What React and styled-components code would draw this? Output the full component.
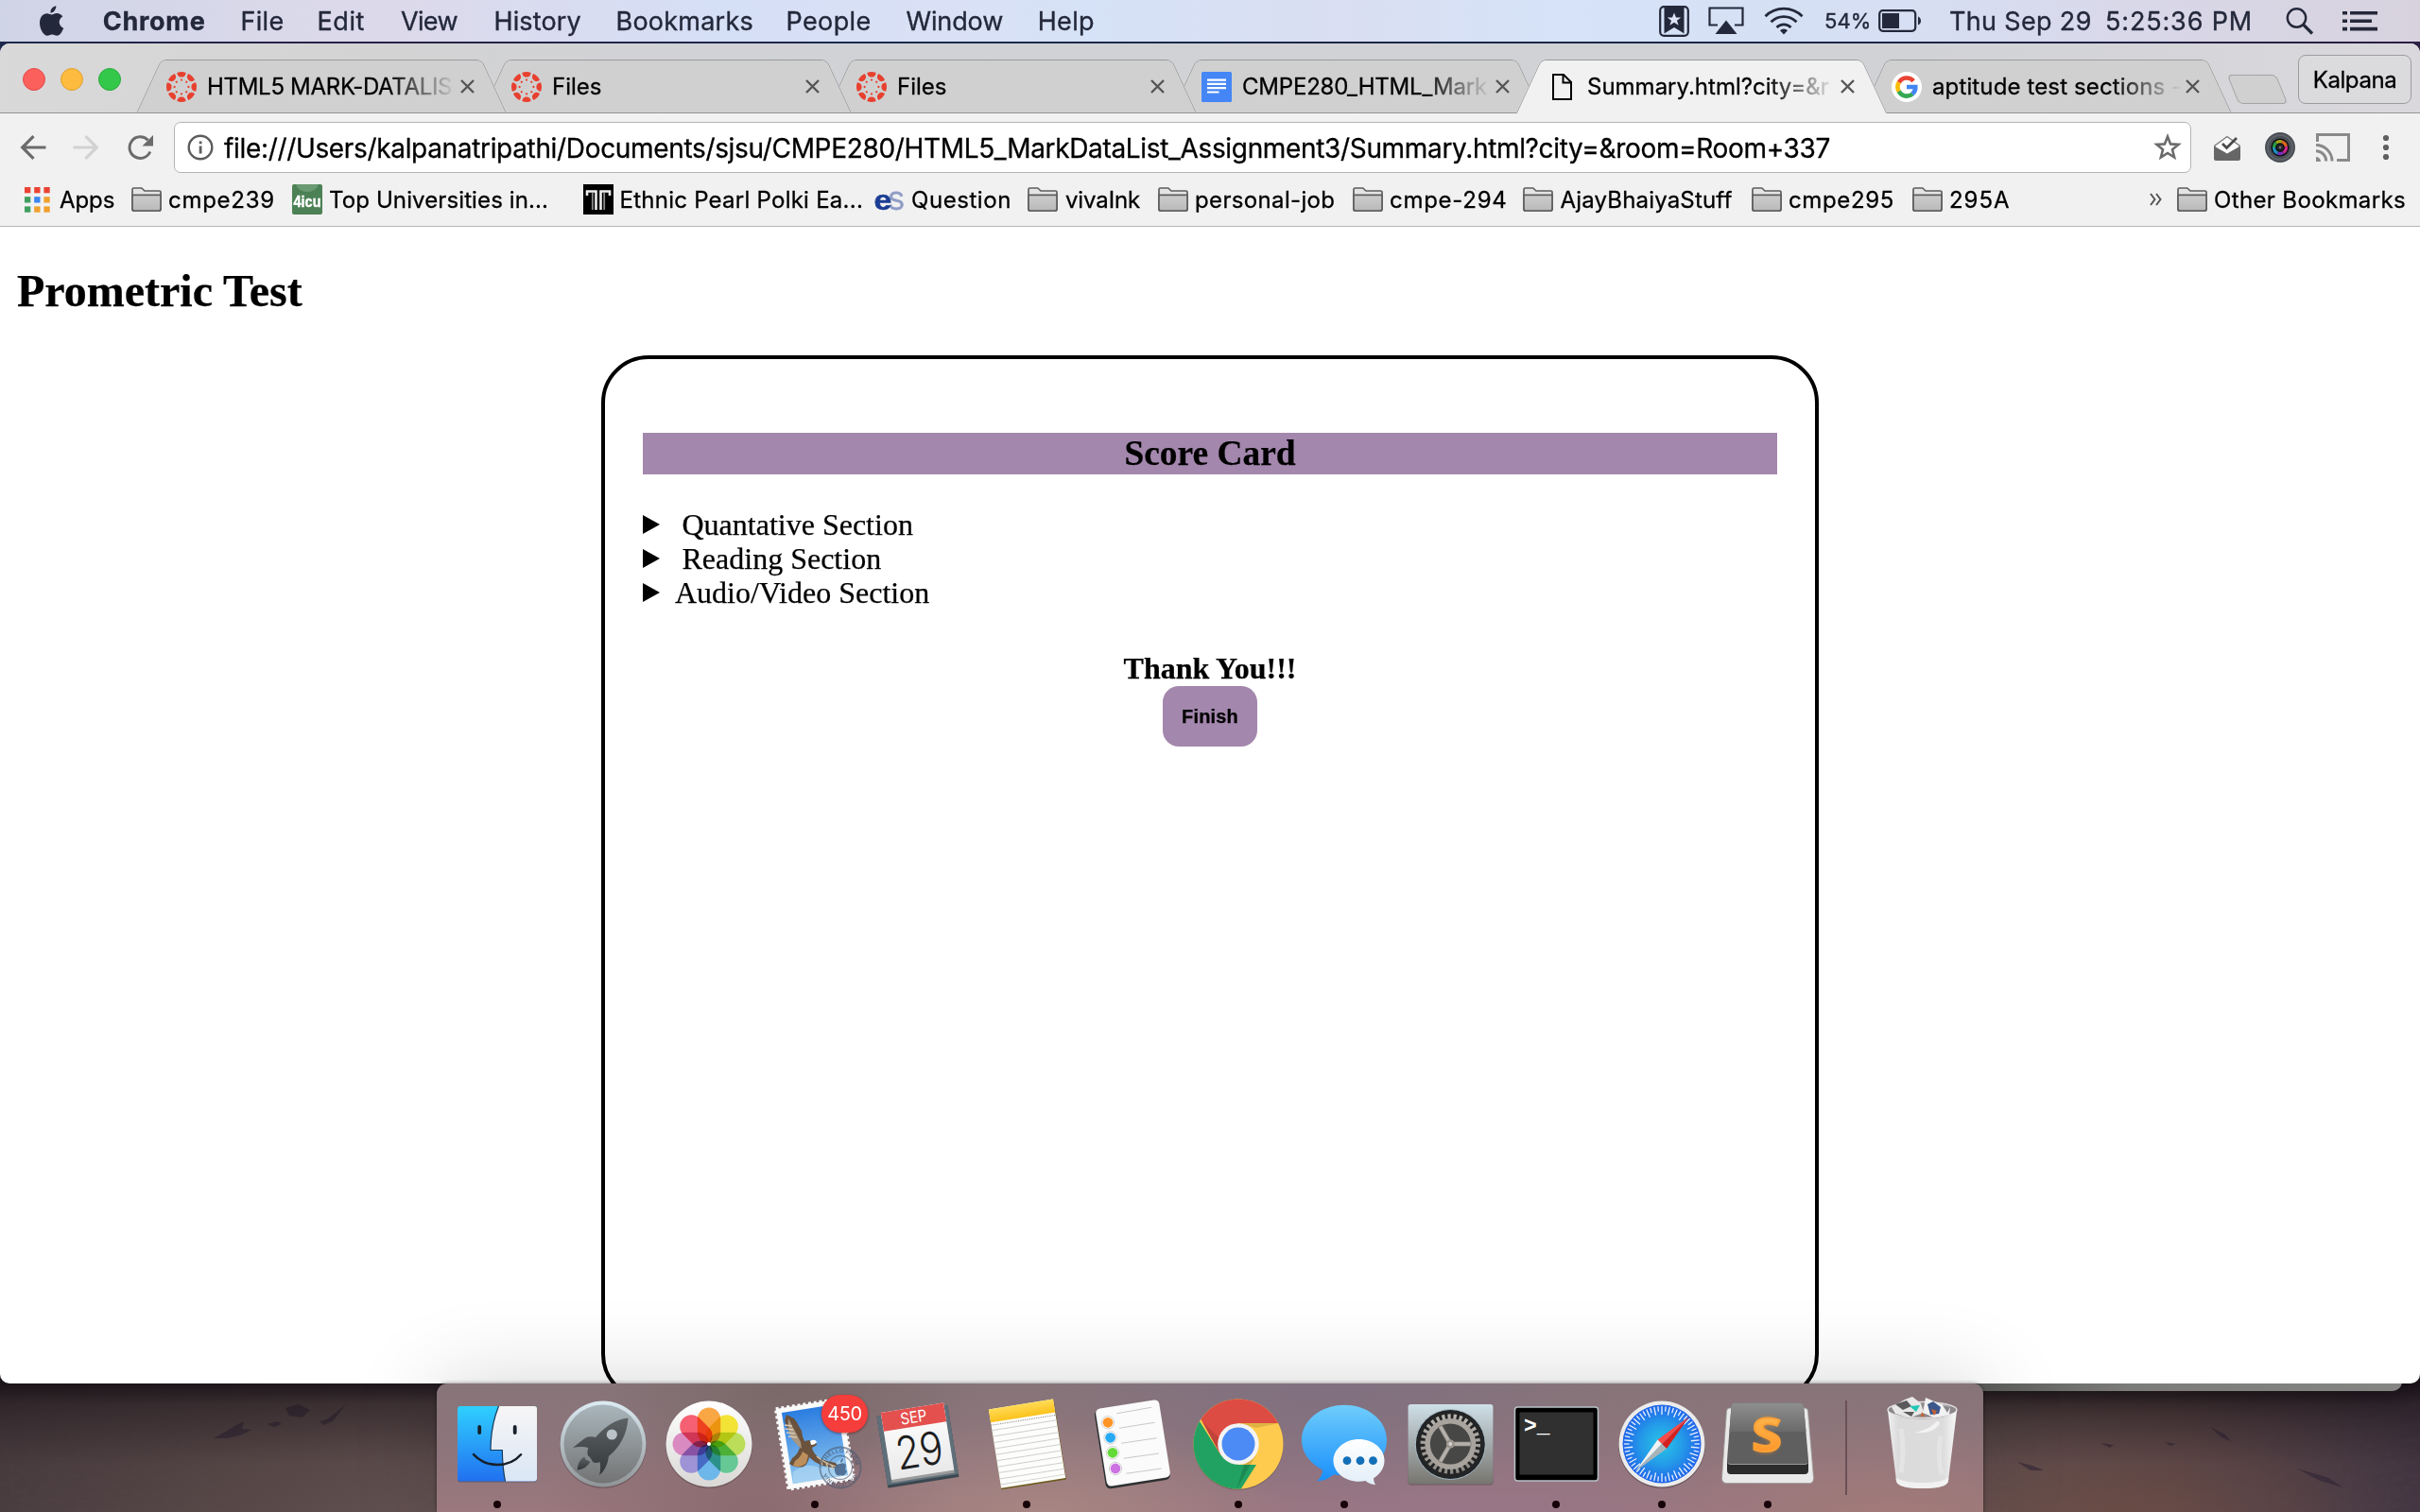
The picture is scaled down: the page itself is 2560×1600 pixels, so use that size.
import React from "react";
import styled, { createGlobalStyle, css } from "styled-components";

const UI = `Inter, Roboto, "Liberation Sans", sans-serif`;
const SERIF = `"Liberation Serif", "Times New Roman", serif`;
const PURPLE = "#a387ad";
const INK = "#23283a";

const Global = createGlobalStyle`
  html, body { margin: 0; padding: 0; }
  body { width: 2560px; height: 1600px; overflow: hidden; font-family: ${UI}; }
  *, *::before, *::after { box-sizing: border-box; }
  svg { display: block; flex: none; }
`;

const Desktop = styled.div`
  position: relative;
  width: 2560px;
  height: 1600px;
  overflow: hidden;
  display: flex;
  flex-direction: column;
  background: linear-gradient(90deg, #1d2a4c 0, #2a2148 350px, #1c2a4e 900px, #1c2748 2000px, #2c1e44 100%);
`;

/* ---------- menu bar ---------- */

const MenuBar = styled.header`
  display: flex;
  flex: none;
  align-items: center;
  height: 44px;
  margin-bottom: 2px;
  color: ${INK};
  font-size: 27px;
  -webkit-text-stroke: 0.35px ${INK};
  background: linear-gradient(90deg, #cfd4e6 0, #dad9ea 300px, #dcd9ea 420px, #d5dff6 760px, #dae1f6 1000px, #d6e2f7 1150px, #dadff2 1420px, #d6e3f8 1650px, #d6dff4 2000px, #d9d8e9 2250px, #d7d2de 100%);
`;

const Cell = styled.span`
  display: flex;
  align-items: center;
  flex: none;
  width: ${(p) => p.$w}px;
  height: 100%;
  white-space: pre;
  font-weight: ${(p) => (p.$strong ? 700 : 400)};
  font-size: ${(p) => (p.$size ? p.$size + "px" : "inherit")};
  letter-spacing: ${(p) => p.$ls || 0}px;
`;

const Spacer = styled.div`
  flex: 1;
`;

/* ---------- browser window ---------- */

const BrowserWindow = styled.main`
  position: relative;
  z-index: 1;
  flex: none;
  display: flex;
  flex-direction: column;
  height: 1418px;
  overflow: hidden;
  border-radius: 10px;
  background: #fff;
`;

const TabStrip = styled.div`
  position: relative;
  display: flex;
  flex: none;
  height: 74px;
  background: linear-gradient(90deg, #d9d9da 0, #d3d3d4 400px, #d0d2d6 900px, #d0d2d5 2000px, #dad8dc 100%);
  border-bottom: 1px solid #949494;
  -webkit-text-stroke: 0.3px #000;
`;

const Lights = styled.div`
  display: flex;
  gap: 16px;
  width: 144px;
  flex: none;
  padding: 26px 0 0 24px;
`;

const Light = styled.span`
  width: 24px;
  height: 24px;
  border-radius: 50%;
  background: ${(p) => p.$fill};
  border: 1px solid ${(p) => p.$edge};
`;

const tabFace = css`
  content: "";
  position: absolute;
  top: 0;
  height: 57px;
  background: ${(p) => (p.$active ? "#f1f1f1" : "#d0d0d0")};
  border: 1.5px solid #9b9b9c;
  border-bottom: ${(p) => (p.$active ? "0" : "1px solid #949494")};
`;

const Tab = styled.div`
  position: relative;
  z-index: ${(p) => p.$z};
  display: flex;
  align-items: center;
  flex: none;
  width: 392px;
  height: 57px;
  margin: 17px -27px 0 0;
  padding-left: 31.5px;
  color: #000;
  font-size: 24px;
  &::before {
    ${tabFace}
    left: 13px;
    width: 200px;
    border-right: 0;
    border-top-left-radius: 6px;
    transform: skewX(-24.8deg);
  }
  &::after {
    ${tabFace}
    right: 13px;
    width: 200px;
    border-left: 0;
    border-top-right-radius: 6px;
    transform: skewX(24.8deg);
  }
  & > * {
    position: relative;
    z-index: 1;
  }
`;

const TabTitle = styled.span`
  flex: none;
  width: 268px;
  margin-left: 11.5px;
  white-space: pre;
  line-height: 34px;
  letter-spacing: ${(p) => p.$ls || 0}px;
  mask-image: linear-gradient(90deg, #000 0, #000 190px, transparent 264px);
`;

const NewTab = styled.div`
  width: 52px;
  height: 31px;
  margin: 33px 0 0 28px;
  border: 1.5px solid #a3a3a4;
  border-radius: 5px;
  background: #d0d0d0;
  transform: skewX(22deg);
`;

const Profile = styled.div`
  display: flex;
  align-items: center;
  justify-content: center;
  width: 120px;
  height: 52px;
  margin: 12px 9px 0 auto;
  border: 1.5px solid #9d9c9e;
  border-radius: 8px;
  font-size: 24px;
  letter-spacing: -0.4px;
  color: #000;
  background: #dbdadd;
`;

const Toolbar = styled.div`
  display: flex;
  flex: none;
  align-items: center;
  height: 72px;
  padding: 0 0 0 19px;
  background: #f1f1f1;
`;

const Omnibox = styled.div`
  display: flex;
  align-items: center;
  width: 2134px;
  height: 54px;
  margin-left: 20px;
  padding: 0 9px 0 13px;
  border: 1.5px solid #b4b4b4;
  border-radius: 7px;
  background: #fff;
`;

const Url = styled.span`
  flex: 1;
  margin-left: 11px;
  padding-top: 2px;
  font-size: 28px;
  letter-spacing: -0.335px;
  white-space: pre;
  color: #000;
  -webkit-text-stroke: 0.3px #000;
`;

const ToolSlot = styled.span`
  margin-left: ${(p) => p.$gap}px;
`;

const BookmarkBar = styled.div`
  display: flex;
  flex: none;
  align-items: center;
  height: 48px;
  padding: 0 0 9px 26px;
  background: #f1f1f1;
  border-bottom: 1px solid #b6b6b6;
  -webkit-text-stroke: 0.3px #000;
`;

const Bookmark = styled.div`
  display: flex;
  align-items: center;
  flex: none;
  gap: ${(p) => p.$gap || 7}px;
  width: ${(p) => p.$w}px;
  height: 38px;
  font-size: 24px;
  color: #000;
  white-space: pre;
  letter-spacing: ${(p) => p.$ls || 0}px;
`;

/* ---------- page ---------- */

const Page = styled.section`
  flex: 1;
  min-height: 0;
  overflow: hidden;
  padding: 41px 18px 0;
  font-family: ${SERIF};
  color: #000;
  -webkit-text-stroke: 0.25px #000;
`;

const Heading = styled.h1`
  margin: 0;
  font-size: 48px;
  line-height: 54px;
`;

const Card = styled.article`
  width: 1288px;
  height: 1107px;
  margin: 41px auto 0;
  padding: 78px 40px 0;
  border: 4px solid #000;
  border-radius: 50px;
  font-size: 32px;
  line-height: 36px;
`;

const CardTitle = styled.h3`
  margin: 0 0 35px;
  background: ${PURPLE};
  text-align: center;
  font-size: 37.44px;
  line-height: 44px;
`;

const Section = styled.div`
  display: flex;
  align-items: center;
  height: 36px;
  white-space: pre;
`;

const Marker = styled.span`
  width: 0;
  height: 0;
  margin-right: ${(p) => p.$gap}px;
  border-left: 18px solid #000;
  border-top: 10.5px solid transparent;
  border-bottom: 10.5px solid transparent;
`;

const Closing = styled.div`
  display: flex;
  flex-direction: column;
  align-items: center;
  margin-top: 44px;
  font-weight: bold;
`;

const Finish = styled.button`
  width: 100px;
  height: 64px;
  margin-top: 1px;
  padding: 1px 0 0;
  border: 0;
  border-radius: 17px;
  background: ${PURPLE};
  color: #000;
  font: bold 20px "Liberation Sans", Arial, sans-serif;
  letter-spacing: 0.15px;
`;

/* ---------- wallpaper and dock ---------- */

const Ground = styled.div`
  position: absolute;
  left: 0;
  right: 0;
  bottom: 0;
  height: 150px;
  background:
    radial-gradient(ellipse 260px 90px at 2240px 150px, rgba(118, 78, 66, 0.55), transparent),
    linear-gradient(90deg, #4c3f42 0, #5a4a4a 240px, #665454 460px, #695554 2100px, #624c4c 2300px, #504048 2470px, #463844 100%);
`;

const GroundShade = styled.div`
  position: absolute;
  left: 0;
  right: 0;
  bottom: 0;
  height: 150px;
  background: linear-gradient(180deg, rgba(18, 12, 18, 0.85) 14px, rgba(22, 15, 20, 0.5) 36px, rgba(24, 16, 20, 0.1) 100px, rgba(24, 16, 20, 0.04) 150px);
`;

const BackWindow = styled.div`
  position: absolute;
  left: 1500px;
  width: 1041px;
  top: 1440px;
  height: 32px;
  border-radius: 0 0 10px 10px;
  background: linear-gradient(90deg, #5c5d5a 600px, #7b7c79 750px, #858583 100%);
  box-shadow: 0 6px 30px rgba(0, 0, 0, 0.4);
`;

const Dock = styled.nav`
  position: absolute;
  z-index: 2;
  left: 462px;
  bottom: 0;
  display: flex;
  width: 1636px;
  height: 136px;
  padding: 0 8px;
  border-radius: 11px 11px 0 0;
  background:
    radial-gradient(ellipse 260px 110px at 640px 140px, rgba(172, 138, 132, 0.75), transparent),
    radial-gradient(ellipse 260px 110px at 1540px 140px, rgba(168, 124, 118, 0.6), transparent),
    radial-gradient(ellipse 300px 130px at 940px 0, rgba(126, 110, 132, 0.7), transparent),
    radial-gradient(ellipse 200px 110px at 370px 0, rgba(120, 103, 102, 0.9), transparent),
    radial-gradient(ellipse 220px 120px at 330px 136px, rgba(134, 102, 106, 0.7), transparent),
    radial-gradient(ellipse 400px 110px at 1080px 150px, rgba(152, 116, 138, 0.8), transparent),
    linear-gradient(180deg, #867479 0, #8e757c 55%, #9a787d 100%);
  box-shadow: 0 0 4px rgba(0, 0, 0, 0.45), 0 0 90px rgba(0, 0, 0, 0.17);
`;

const DockItem = styled.div`
  position: relative;
  width: 112px;
  height: 136px;
  flex: none;
  &::after {
    content: "";
    display: ${(p) => (p.$running ? "block" : "none")};
    position: absolute;
    left: 52px;
    top: 124px;
    width: 8px;
    height: 8px;
    border-radius: 50%;
    background: #160208;
  }
`;

const Divider = styled.div`
  width: 2px;
  height: 100px;
  margin: 18px 23px 0 26px;
  background: #6a5157;
`;

const Badge = styled.span`
  position: absolute;
  left: 63px;
  top: 12px;
  width: 49px;
  height: 40px;
  border-radius: 20px;
  background: #f53d3b;
  color: #fff;
  font-size: 20px;
  line-height: 40px;
  text-align: center;
  letter-spacing: -0.4px;
  box-shadow: 0 1px 3px rgba(80, 0, 0, 0.5);
`;

/* ---------- menu bar icons ---------- */

const Apple = () => (
  <svg width="27" height="32" viewBox="0 0 27 32" fill={INK}>
    <path d="M18.3 0.3c.2 2-.6 3.900-1.800 5.200-1.200 1.400-2.700 2.200-4.100 2.100-.2-1.900.7-3.900 1.700-5C15.200 1.300 17 .4 18.300.3z" />
    <path d="M13.900 9.600c1.100 0 2.700-1.500 5.200-1.500 2.400 0 4.800 1.200 6.200 3.400-5.400 3.200-4.400 10 .9 12.300-1.400 3.800-4 7.900-6.700 7.900-2.100 0-2.900-1.300-5.300-1.300s-3.300 1.300-5.300 1.300C5.300 31.700 1 25 1 18.200 1 11.900 4.800 8.300 8.600 8.300c2.400 0 4.100 1.300 5.300 1.300z" />
  </svg>
);
const BookStar = () => (
  <svg width="32" height="33" viewBox="0 0 32 33">
    <rect x="1.2" y="1.200" width="29.600" height="30.600" rx="4" fill="none" stroke={INK} strokeWidth="2.200" />
    <path d="M5.500 2h21v27.500L16 23 5.500 29.500z" fill={INK} />
    <path d="M16 7.500l2 5h5.200l-4.200 3.200 1.600 5.100L16 17.700l-4.600 3.100 1.600-5.100-4.200-3.200H14z" fill="#dde4f6" />
  </svg>
);
const AirPlay = () => (
  <svg width="38" height="30" viewBox="0 0 38 30">
    <path d="M10 19.500H1.500V1.500h35v18H28" fill="none" stroke={INK} strokeWidth="2.200" />
    <path d="M19 14.500L30.500 29h-23z" fill={INK} />
  </svg>
);
const Wifi = () => (
  <svg width="42" height="30" viewBox="0 0 42 30" fill="none" stroke={INK} strokeWidth="2.800">
    <path d="M1.500 10.200a27.500 27.500 0 0 1 39 0" />
    <path d="M7.500 16.200a19 19 0 0 1 27 0" />
    <path d="M13.500 22a10.600 10.600 0 0 1 15 0" />
    <path d="M21 29.500l-4-4.300a5.500 5.500 0 0 1 8 0z" fill={INK} stroke="none" />
  </svg>
);
const Battery = () => (
  <svg width="46" height="24" viewBox="0 0 46 24">
    <rect x="1.200" y="1.200" width="38" height="21.600" rx="3.500" fill="none" stroke={INK} strokeWidth="2.200" />
    <rect x="4" y="4" width="18" height="16" fill={INK} />
    <path d="M42 7.500q3 1.500 3 4.500t-3 4.500z" fill={INK} />
  </svg>
);
const Search = () => (
  <svg width="30" height="29" viewBox="0 0 30 29" fill="none" stroke={INK} strokeWidth="2.400">
    <circle cx="11.500" cy="11" r="9.700" />
    <path d="M18.500 18l9.500 9.500" strokeWidth="3.200" />
  </svg>
);
const ListIcon = () => (
  <svg width="37" height="21" viewBox="0 0 37 21" fill={INK}>
    <path d="M0 0h5v3.600H0zM8 0h29v3.600H8zM0 8.400h5V12H0zM8 8.400h23V12H8zM0 16.800h5v3.600H0zM8 16.800h29v3.600H8z" />
  </svg>
);

/* ---------- tab icons ---------- */

const Canvas = () => (
  <svg width="32" height="32" viewBox="0 0 32 32" fill="#e8402f">
    {[0, 45, 90, 135, 180, 225, 270, 315].map((a) => (
      <g key={a} transform={`rotate(${a} 16 16)`}>
        <path d="M11.300 0.900Q16-.9 20.700.9 20.200 5.600 16 5.600T11.300.9z" />
        <circle cx="16" cy="8.600" r="1.150" />
      </g>
    ))}
  </svg>
);
const Docs = () => (
  <svg width="32" height="32" viewBox="0 0 32 32">
    <rect width="32" height="32" rx="1.500" fill="#4486f5" />
    <path d="M6 7.500h20v2.200H6zM6 11.800h20V14H6zM6 16.100h20v2.200H6zM6 20.400h12.500v2.200H6z" fill="#fff" />
  </svg>
);
const PageIcon = () => (
  <svg width="32" height="32" viewBox="0 0 32 32" fill="none" stroke="#000" strokeWidth="2">
    <path d="M7 3h11l8 8v18H7z" />
    <path d="M17.500 3v8.500H26" />
  </svg>
);
const Google = () => (
  <svg width="32" height="32" viewBox="0 0 32 32" fill="none" strokeWidth="4.600">
    <circle cx="16" cy="16" r="16" fill="#fff" />
    <path d="M23.200 9.800A9.500 9.500 0 0 0 7.800 11.300" stroke="#ea4335" />
    <path d="M7.800 11.200a9.500 9.500 0 0 0 0 9.600" stroke="#fbbc05" />
    <path d="M7.700 20.600a9.500 9.500 0 0 0 14.400 2.800" stroke="#34a853" />
    <path d="M22 23.500A9.500 9.500 0 0 0 25.300 16H16" stroke="#4285f4" />
  </svg>
);
const Close = () => (
  <svg width="15" height="15" viewBox="0 0 15 15" stroke="#555" strokeWidth="2.400">
    <path d="M1 1l13 13M14 1L1 14" />
  </svg>
);

/* ---------- toolbar icons ---------- */

const Arrow = ({ color, flip }) => (
  <svg width="30" height="28" viewBox="0 0 30 28" fill="none" stroke={color} strokeWidth="3.200">
    <g transform={flip ? "translate(30 0) scale(-1 1)" : undefined}>
      <path d="M29.500 14H5M16.500 2.200L4.700 14l11.800 11.800" />
    </g>
  </svg>
);
const Reload = () => (
  <svg width="30" height="28" viewBox="0 0 30 28">
    <path d="M24.800 18.500a11.300 11.300 0 1 1-2.300-12.200" fill="none" stroke="#6b6b6b" strokeWidth="3" />
    <path d="M28 1v11.500H16.500z" fill="#6b6b6b" />
  </svg>
);
const Info = () => (
  <svg width="28" height="28" viewBox="0 0 28 28">
    <circle cx="14" cy="14" r="12.300" fill="none" stroke="#5c5c5c" strokeWidth="2.400" />
    <path d="M12.700 7.500h2.800v2.800h-2.800zM12.700 12.500h2.800v8h-2.800z" fill="#5c5c5c" />
  </svg>
);
const Star = () => (
  <svg width="30" height="30" viewBox="0 0 30 30">
    <path d="M15 3.500l3.100 7.900 8.400.5-6.500 5.400 2.100 8.200L15 21l-7.100 4.500L10 17.300 3.500 11.900l8.400-.5z" fill="none" stroke="#6b6b6b" strokeWidth="2.600" />
  </svg>
);
const Inbox = () => (
  <svg width="28" height="27" viewBox="0 0 28 27">
    <path d="M1 11L14 1.500 27 11v4L14 22 1 15z" fill="#fafafa" stroke="#777" strokeWidth="1.400" />
    <path d="M0 11.500l14 8 14-8V25a2 2 0 0 1-2 2H2a2 2 0 0 1-2-2z" fill="#666" />
    <path d="M9 9l4.500 4.500L24 3" fill="none" stroke="#4a4a4a" strokeWidth="2.800" />
  </svg>
);
const Lens = () => (
  <svg width="32" height="32" viewBox="0 0 32 32" fill="none">
    <circle cx="16" cy="16" r="16" fill="#4b5057" />
    <circle cx="16" cy="16" r="13" stroke="#62676e" strokeWidth="1.500" />
    <circle cx="16" cy="16" r="9.500" fill="#0c0d12" />
    <g strokeWidth="3.200">
      <path d="M9.500 16A6.500 6.500 0 0 1 12 10.900" stroke="#2a9c42" />
      <path d="M12 10.900a6.500 6.500 0 0 1 6-1" stroke="#a8a41c" />
      <path d="M18 9.900a6.500 6.500 0 0 1 4.400 5" stroke="#d96522" />
      <path d="M22.400 15a6.500 6.500 0 0 1-3 6.500" stroke="#d0278c" />
      <path d="M19.400 21.500a6.500 6.500 0 0 1-6 .5" stroke="#7a2fb8" />
      <path d="M13.400 22a6.500 6.500 0 0 1-3.900-6" stroke="#1f8fc0" />
    </g>
    <circle cx="16" cy="16" r="3.500" fill="#23242b" />
    <circle cx="16" cy="16" r="1.300" fill="#777" />
  </svg>
);
const Cast = () => (
  <svg width="36" height="30" viewBox="0 0 36 30" fill="none" stroke="#8a8a8a" strokeWidth="3">
    <path d="M1.500 9V1.500h33v27H22" />
    <path d="M0 12.500A17 17 0 0 1 17 29.500M0 18.800a10.700 10.700 0 0 1 10.700 10.700" />
    <path d="M0 25v5h5a5 5 0 0 0-5-5z" fill="#8a8a8a" stroke="none" />
  </svg>
);
const Kebab = () => (
  <svg width="8" height="28" viewBox="0 0 8 28" fill="#5f5f5f">
    <circle cx="4" cy="4" r="3.100" />
    <circle cx="4" cy="14" r="3.100" />
    <circle cx="4" cy="24" r="3.100" />
  </svg>
);

/* ---------- bookmark icons ---------- */

const AppsGrid = () => (
  <svg width="27" height="27" viewBox="0 0 27 27">
    {["#ea4335", "#ea4335", "#ea4335", "#3f9e5e", "#3b86f0", "#f0a02c", "#3f9e5e", "#f0a02c", "#f0a02c"].map((c, i) => (
      <rect key={i} x={(i % 3) * 10.200} y={Math.floor(i / 3) * 10.200} width="6.300" height="6.300" fill={c} />
    ))}
  </svg>
);
const Folder = () => (
  <svg width="32" height="26" viewBox="0 0 32 26">
    <defs>
      <linearGradient id="folder" x1="0" y1="0" x2="0" y2="1">
        <stop offset="0" stopColor="#cdcdcd" />
        <stop offset="1" stopColor="#b9b9b9" />
      </linearGradient>
    </defs>
    <path d="M1 23V2.500A1.500 1.500 0 0 1 2.500 1h8.300L14 4h15.500A1.500 1.500 0 0 1 31 5.500V23a2 2 0 0 1-2 2H3a2 2 0 0 1-2-2z" fill="#e4e4e4" stroke="#5e5e5e" strokeWidth="1.700" />
    <path d="M1 8.300h30V23a2 2 0 0 1-2 2H3a2 2 0 0 1-2-2z" fill="url(#folder)" stroke="#5e5e5e" strokeWidth="1.700" />
  </svg>
);
const FourIcu = () => (
  <svg width="32" height="32" viewBox="0 0 32 32">
    <rect width="32" height="32" rx="2" fill="#4c8155" />
    <path d="M4 0h24q-3 8-12 8T4 0z" fill="#6a9a71" />
    <text x="16" y="24" textAnchor="middle" fill="#fff" stroke="#fff" strokeWidth=".5" fontFamily="Liberation Sans, sans-serif" fontWeight="bold" fontSize="17" textLength="29" lengthAdjust="spacingAndGlyphs">4icu</text>
  </svg>
);
const Pearl = () => (
  <svg width="32" height="32" viewBox="0 0 32 32" fill="none">
    <rect width="32" height="32" fill="#000" />
    <path d="M4 12V7.500h9.500V27M28 12V7.500h-9.500V27" stroke="#eee" strokeWidth="2.600" />
    <path d="M9.800 9v18M22.200 9v18" stroke="#8a8a8a" strokeWidth="1.800" />
  </svg>
);
const Es = () => (
  <svg width="32" height="32" viewBox="0 0 32 32" fontFamily="Liberation Sans, sans-serif">
    <text x="14.500" y="26.500" fill="#8e9cc6" stroke="#8e9cc6" strokeWidth=".8" fontSize="28" textLength="17.500" lengthAdjust="spacingAndGlyphs">S</text>
    <text x="-.5" y="26.500" fill="#1b3d93" stroke="#1b3d93" strokeWidth=".5" fontWeight="bold" fontSize="29" textLength="19.500" lengthAdjust="spacingAndGlyphs">e</text>
  </svg>
);

/* ---------- dock artwork ---------- */

const Art = ({ children }) => (
  <svg width="112" height="136" viewBox="0 0 112 136">
    {children}
  </svg>
);
const Grad = ({ id, a, b, x2 = 0, y2 = 1 }) => (
  <linearGradient id={id} x1="0" y1="0" x2={x2} y2={y2}>
    <stop offset="0" stopColor={a} />
    <stop offset="1" stopColor={b} />
  </linearGradient>
);

const Finder = () => (
  <Art>
    <defs>
      <Grad id="fb" a="#2fd0ff" b="#2170f0" />
      <Grad id="fw" a="#f7f5f6" b="#d9e6f5" />
    </defs>
    <rect x="14" y="25" width="84" height="79.500" rx="3" fill="#000" opacity=".25" />
    <rect x="14" y="24" width="84" height="79.500" rx="3" fill="url(#fb)" />
    <path d="M57.500 24H95a3 3 0 0 1 3 3v73.500a3 3 0 0 1-3 3H64.500q-3-15-3.200-33H49Q49 45 57.500 24z" fill="url(#fw)" />
    <path d="M57.500 24Q49 45 49 70.500h12.300q.2 18 3.200 33" fill="none" stroke="#143a5c" strokeWidth="1.200" />
    <g fill="none" stroke="#16202c" strokeLinecap="round">
      <path d="M37.200 46v6M74.700 46v6" strokeWidth="3.800" />
      <path d="M31 75.200Q41 86 56.300 86T81 75.200" strokeWidth="2.500" />
    </g>
  </Art>
);
const Launchpad = () => (
  <Art>
    <defs>
      <Grad id="lr" a="#dcebf3" b="#8f9496" />
      <Grad id="lb" a="#a9b6bc" b="#737373" />
      <Grad id="lk" a="#5d6264" b="#34383a" />
    </defs>
    <circle cx="56" cy="65" r="46" fill="#000" opacity=".2" />
    <circle cx="56" cy="64" r="45.500" fill="url(#lr)" />
    <circle cx="56" cy="64" r="41.500" fill="url(#lb)" />
    <path d="M82.500 36.500Q64 38.500 48 57q-8-2-12 1.500-6.500 5-12 9.500 9-2 16.500 0-2 4-.5 8.500l2 1.500 3.500 5.500q4 1 7-.5 1.500 6.500-.5 14Q60 91 62 77q19-16 20.500-40.500z" fill="url(#lk)" />
    <path d="M28.600 91.700Q29 82 36 77.500l2 3.500 4.500 1.500Q38 91 28.600 91.700z" fill="url(#lk)" />
    <circle cx="65.300" cy="54" r="5.600" fill="#b9c3c8" />
  </Art>
);
const PETALS = ["#f9a13a", "#f2e22b", "#b8dc52", "#5fc690", "#67b4ea", "#9a8ed4", "#d886bf", "#f4596a"];
const Photos = () => (
  <Art>
    <defs>
      <Grad id="pw" a="#ffffff" b="#d9d8d6" />
    </defs>
    <circle cx="56" cy="65" r="46" fill="#000" opacity=".2" />
    <circle cx="56" cy="64" r="45.500" fill="url(#pw)" />
    <g style={{ isolation: "isolate" }}>
      {PETALS.map((c, i) => (
        <rect key={c} x="43.800" y="25.500" width="24.400" height="38.500" rx="12.200" fill={c} fillOpacity=".95" style={{ mixBlendMode: "multiply" }} transform={`rotate(${i * 45} 56 64)`} />
      ))}
    </g>
    <circle cx="56" cy="64" r="2" fill="#fff" />
  </Art>
);
const Mail = () => (
  <Art>
    <defs>
      <Grad id="ms" a="#2b7de0" b="#8ec6f0" />
    </defs>
    <g transform="rotate(-9 56 64)">
      <rect x="21" y="22" width="70" height="86" fill="#000" opacity=".25" />
      <rect x="21" y="21" width="70" height="86" fill="#fafafa" stroke="#fafafa" strokeWidth="3.500" strokeDasharray="3 2.800" />
      <rect x="26.500" y="26" width="59" height="76" fill="url(#ms)" />
      <path d="M28 90q14-8 26-2t30-6v20H27z" fill="#b6daf4" opacity=".6" />
    </g>
    <path d="M26 33l4 2 4 2 3 4 2 4 3 5 1 6 2 5 5-1 3 2q5 0 5 3l-5 3q1 6 8 11 8 4 17 5l3 5q-10 1-19-3-7-3-12-8-1 7-6 10-8 2-15-3l3-6q6-4 8-11-2-7-8-13-6-7-8-16z" fill="#6b523c" />
    <path d="M28 37l4 8 5 9 4 8 1 7q-7-5-11-12-4-8-3-20z" fill="#a9967f" />
    <path d="M24 44l8 1M24.500 48l9 1M26 52l9 1M28 56l9 1" stroke="#d6c9b6" strokeWidth="1.600" />
    <path d="M58 77q8 8 24 12M62 82l2 4M68 85l2 4M74 87l1 4" stroke="#cdbda6" strokeWidth="1.600" fill="none" />
    <path d="M43 72l6 4-2 8q-6 6-14 3l2-5q6-4 8-10z" fill="#bd8f5c" />
    <path d="M51 61q5-3 7 1-2 3-6 3z" fill="#fff" />
    <g fill="none" stroke="#4b5a72" opacity=".6">
      <circle cx="83" cy="89" r="21.500" strokeWidth="1.800" />
      <circle cx="83" cy="89" r="12.500" strokeWidth="1.300" />
      <path id="ring" d="M67 89a16 16 0 1 1 32 0a16 16 0 1 1-32 0" stroke="none" />
    </g>
    <text fontFamily="Liberation Sans, sans-serif" fontWeight="bold" fontSize="6" fill="#46536b" opacity=".7">
      <textPath href="#ring" startOffset="8">HELLO FROM</textPath>
    </text>
    <text fontFamily="Liberation Sans, sans-serif" fontWeight="bold" fontSize="6" fill="#46536b" opacity=".7">
      <textPath href="#ring" startOffset="57">CALIFORNIA</textPath>
    </text>
    <path d="M83 85q5-2 6 2-2 4 1 6-3 6-7 4-4 2-6-4-1-8 6-8zM83 84q0-4 3-5 0 4-3 5z" fill="#3e5a80" opacity=".8" />
  </Art>
);
const Calendar = () => (
  <Art>
    <defs>
      <Grad id="cw" a="#ffffff" b="#e9e9e9" />
    </defs>
    <g transform="rotate(-9 54 64)">
      <rect x="14.500" y="28" width="76" height="77" rx="1" fill="#3b4750" />
      <rect x="14.500" y="28" width="76" height="74" rx="1" fill="#5f6f7a" />
      <rect x="19.500" y="25" width="67" height="75" fill="#9a9a9a" />
      <rect x="19.500" y="25" width="67" height="72" fill="url(#cw)" />
      <rect x="19.500" y="25" width="67" height="20" fill="#e4504e" />
      <text x="53" y="41" textAnchor="middle" fontFamily="Inter, sans-serif" fontSize="17" fill="#fff" textLength="28" lengthAdjust="spacingAndGlyphs">SEP</text>
      <text x="53.500" y="88" textAnchor="middle" fontFamily="Inter, sans-serif" fontWeight="300" fontSize="48" fill="#1d1d1f" textLength="50" lengthAdjust="spacingAndGlyphs">29</text>
    </g>
  </Art>
);
const Notes = () => (
  <Art>
    <defs>
      <Grad id="ny" a="#ffdb57" b="#fbc21c" />
    </defs>
    <g transform="rotate(-9 56.500 63.500)">
      <rect x="22" y="22.500" width="69.500" height="85" fill="#6b5a1a" />
      <rect x="22" y="21.500" width="69" height="84.500" fill="#fdfdfb" />
      <rect x="22" y="21.500" width="69" height="14" fill="url(#ny)" />
      <path d="M22 38.500h69" stroke="#8a8a86" strokeWidth="1" strokeDasharray="1.200 1.200" />
      {[44, 50.500, 57, 63.500, 70, 76.500, 83, 89.500, 96, 102].map((y) => (
        <path key={y} d={`M22 ${y}h69`} stroke="#cfcfcd" strokeWidth="1" />
      ))}
    </g>
  </Art>
);
const Reminders = () => (
  <Art>
    <g transform="rotate(-9 56.500 63)">
      <rect x="21" y="23" width="69" height="84" rx="5" fill="#2e3033" />
      <rect x="22.500" y="21.500" width="68" height="83" rx="5" fill="#fbfbfb" />
    </g>
    {[["#ff9527", 30, 41.300], ["#28aaf2", 32.600, 57.300], ["#63da38", 35, 73.300], ["#cc73e1", 38, 90]].map(([c, x, y]) => (
      <g key={c}>
        <circle cx={x} cy={y} r="6.700" fill="#fff" stroke="#cfcfcf" strokeWidth="1" />
        <circle cx={x} cy={y} r="5.400" fill={c} />
      </g>
    ))}
    <path d="M39.400 31.700l36.800-6.400M42 47.300l37.400-6M44 63.300l37.600-5.600M46.600 79.300L84 74M49.400 95.300L86.600 90" stroke="#c9c9c9" strokeWidth="1.100" />
  </Art>
);
const Chrome = () => (
  <Art>
    <defs>
      <clipPath id="cc">
        <circle cx="56" cy="64" r="47.500" />
      </clipPath>
    </defs>
    <circle cx="56" cy="65" r="47.500" fill="#000" opacity=".25" />
    <g clipPath="url(#cc)">
      <rect width="112" height="136" fill="#fecb4e" />
      <path d="M-10 0L36.900 75 56 86h19L47 130H-10z" fill="#22a262" />
      <path d="M16.500 38L36.900 75 56 42h56V0H10z" fill="#dc4c42" />
      <path d="M56 42h43l-24 5z" fill="#000" opacity=".12" />
      <path d="M75 75L54 112l8-26z" fill="#000" opacity=".15" />
      <path d="M17 39.500L37 75l2-14z" fill="#000" opacity=".12" />
    </g>
    <circle cx="56" cy="64" r="21.800" fill="#f4f4f4" />
    <circle cx="56" cy="64" r="17.500" fill="#4c8bf5" />
  </Art>
);
const Messages = () => (
  <Art>
    <defs>
      <Grad id="mb" a="#6fcdfb" b="#1a8ffc" />
      <Grad id="mw" a="#ffffff" b="#e2eef8" />
    </defs>
    <path d="M56 22.700c25 0 45 16.300 45 37.300s-20 37.300-45 37.300q-6 0-11-1-8 7-18 7 6-5 6-12C19 84 11 73 11 60c0-21 20-37.300 45-37.300z" fill="url(#mb)" />
    <path d="M71.500 59c15 0 27 10 27 22.700 0 8-5 14.500-11.500 18.500q0 4 2 7-6-.5-10.500-4.200-3.500.7-7 .7c-15 0-27-10-27-22s12-22.700 27-22.700z" fill="url(#mw)" />
    <g fill="#136fb8">
      <circle cx="59" cy="81.700" r="4.400" />
      <circle cx="73" cy="81.700" r="4.400" />
      <circle cx="86.500" cy="81.700" r="4.400" />
    </g>
  </Art>
);
const Preferences = () => (
  <Art>
    <defs>
      <Grad id="sb" a="#cfe0e8" b="#77756f" />
      <Grad id="sg" a="#b9b4ae" b="#8f8a84" />
    </defs>
    <rect x="11.500" y="23" width="90" height="84.500" rx="3" fill="#000" opacity=".25" />
    <rect x="11.500" y="22" width="90" height="84.500" rx="3" fill="url(#sb)" />
    <circle cx="56.300" cy="64.500" r="37" fill="#232425" stroke="#a9bccb" strokeWidth="1" />
    <circle cx="56.300" cy="64" r="29" fill="none" stroke="url(#sg)" strokeWidth="5.500" strokeDasharray="3.200 2.873" />
    <circle cx="56.300" cy="64" r="24.200" fill="#474746" stroke="#a8a39d" strokeWidth="5.500" />
    {[0, 120, 240].map((a) => (
      <path key={a} d="M57 61.800h21v4.400H57z" fill="#b5b0aa" stroke="#6f6b66" strokeWidth=".6" transform={`rotate(${a} 56.300 64)`} />
    ))}
    <circle cx="56.300" cy="64" r="4.500" fill="#9a958f" />
    <circle cx="56.300" cy="64" r="2" fill="#d6d2cd" />
  </Art>
);
const Terminal = () => (
  <Art>
    <rect x="12.500" y="25" width="88" height="78" rx="3" fill="#000" stroke="#b9c2c7" strokeWidth="1.500" />
    <rect x="17.500" y="30.500" width="78" height="66" fill="#303030" />
    <text x="22" y="51.500" fontFamily="Liberation Mono, monospace" fontWeight="bold" fontSize="23" fill="#fff">{">_"}</text>
  </Art>
);
const Safari = () => (
  <Art>
    <defs>
      <radialGradient id="sf">
        <stop offset="0" stopColor="#27c6e8" />
        <stop offset=".55" stopColor="#2499e8" />
        <stop offset="1" stopColor="#2063ea" />
      </radialGradient>
    </defs>
    <circle cx="56" cy="65" r="46" fill="#000" opacity=".25" />
    <circle cx="56" cy="64" r="45.500" fill="#ececec" />
    <circle cx="56" cy="64" r="41.500" fill="url(#sf)" />
    {Array.from({ length: 60 }, (_, i) => (
      <path key={i} d={i % 2 ? "M56 24v5.500" : "M56 24v9"} stroke="#e6f2fb" strokeWidth="1.300" transform={`rotate(${i * 6} 56 64)`} />
    ))}
    <path d="M85 35L61 69l-5-5z" fill="#d6211f" />
    <path d="M85 35L51.500 59.500 56 64z" fill="#fb4a47" />
    <path d="M28 93l23.500-33.500L56 64z" fill="#f2f2f2" />
    <path d="M28 93l33-24-5-5z" fill="#a9b4b8" />
  </Art>
);
const Sublime = () => (
  <Art>
    <defs>
      <Grad id="uk" a="#8f8f8f" b="#6a6a6a" />
      <Grad id="us" a="#ffc25a" b="#ff8c1f" />
      <filter id="glow" x="-50%" y="-50%" width="200%" height="200%">
        <feGaussianBlur stdDeviation="2.500" />
      </filter>
    </defs>
    <path d="M16 26h79q3 0 3.500 3l6 71q0 5-4 5.500H12q-4.500-.5-4.500-5.500l5-71q.5-3 3.500-3z" fill="#e9e9e9" stroke="#9d9d9d" strokeWidth=".8" />
    <path d="M13 82h86v10q0 4-4 4H17q-4 0-4-4z" fill="#2c2c2c" />
    <path d="M21 20.500h69q3.500 0 4 3.500l5 57q0 4.500-4 4.500H17q-4 0-4-4.500L17.500 24q.5-3.500 3.500-3.500z" fill="#5f5f5f" />
    <path d="M21 20.500h69q3.500 0 4 3.500l2.500 27H15.500l2-27q.5-3.500 3.500-3.500z" fill="url(#uk)" />
    <path d="M13.500 84q1 1.500 3.500 1.500h78q3 0 3.500-1.500" stroke="#9a9a9a" strokeWidth="1" fill="none" />
    <text x="55" y="72.500" textAnchor="middle" fontFamily="Open Sans, sans-serif" fontWeight="bold" fontSize="50" fill="#ff9a35" opacity=".7" filter="url(#glow)">S</text>
    <text x="55" y="71.500" textAnchor="middle" fontFamily="Open Sans, sans-serif" fontWeight="bold" fontSize="49" fill="url(#us)" stroke="#ffa235" strokeWidth="2" strokeLinejoin="round" textLength="32" lengthAdjust="spacingAndGlyphs">S</text>
  </Art>
);
const Trash = () => (
  <Art>
    <defs>
      <linearGradient id="tb" x1="0" x2="1" y1="0" y2="0">
        <stop offset="0" stopColor="#f0f0f0" />
        <stop offset=".15" stopColor="#dcdbdc" />
        <stop offset=".8" stopColor="#dddcdd" />
        <stop offset="1" stopColor="#f8f8f8" />
      </linearGradient>
    </defs>
    <ellipse cx="56.500" cy="28" rx="36.500" ry="8.500" fill="#8d8789" stroke="#e0dfe0" strokeWidth="1.500" />
    <path d="M24 25l14-8 8-3 9 7 3 10-14 5-16-4z" fill="#e8e8e8" />
    <path d="M28 22l12-4 5 6-9 4zM36 30l12 0-3 5z" fill="#5a5a5c" />
    <path d="M43 24l11-1-4 7z" fill="#21c7b5" />
    <path d="M60 15l14 6 12 4-1 8-16 3-12-5z" fill="#f2f2f2" />
    <path d="M62 22l6-3 8 6-2 7-9 1z" fill="#3c578c" />
    <path d="M66 27l6 2-3 5zM56 30l3 5h-4z" fill="#c8622f" />
    <path d="M78 23l8 2-3 6z" fill="#87888c" />
    <path d="M20 29q10 8.500 36.500 8.500T93 29l-9 74q-1 8-27.500 8T29 103z" fill="url(#tb)" />
    <path d="M28.500 100q9 5 28 5t28-5l-.5 3q-1 8-27.500 8T29 103z" fill="#f6f6f6" opacity=".8" />
    <path d="M48 52q14-2 24-12 4 0 2 4-8 10-26 8z" fill="#f3f3f3" />
    <path d="M34 48q4 24 0 46M76 56q-4 20 1 40" stroke="#ebeaea" strokeWidth="5" fill="none" opacity=".6" />
  </Art>
);

const Soil = () => (
  <svg width="2560" height="150" viewBox="0 0 2560 150">
    <filter id="grain" x="0" y="0" width="100%" height="100%">
      <feTurbulence type="fractalNoise" baseFrequency="0.1 0.22" numOctaves="4" seed="7" />
      <feColorMatrix values="0 0 0 0 0.12  0 0 0 0 0.08  0 0 0 0 0.1  0 0 0 -1.6 0.95" />
    </filter>
    <rect width="2560" height="150" filter="url(#grain)" opacity=".22" />
    <g fill="#2e2336" opacity=".55">
      <path d="M226 72l14-8 10-6 8-4-2 8 10 1-12 6-14 3zM302 40l14-4 12 6-8 8-14-2zM282 57l12-3 4 3-8 3zM338 54l8-2 20-16-14 18-10 4z" />
      <path d="M2134 97l16 4 12 5-14 0zM2222 77l14 2-4 3zM2338 60l16 8 6 7-10-4zM2430 104l34 10 14 10-26-8zM2290 76l12 2-6 2z" />
    </g>
  </svg>
);

/* ---------- data ---------- */

const MENUS = [
  ["Chrome", 145.800, 0.75, true],
  ["File", 81, 0.33],
  ["Edit", 88.500, 0.57],
  ["View", 98.500, -0.64],
  ["History", 129, 0.13],
  ["Bookmarks", 180, 0.24],
  ["People", 127, 0.38],
  ["Window", 139.200, -0.13],
  ["Help", 70, 0.35],
];

const TABS = [
  { icon: <Canvas />, title: "HTML5 MARK-DATALIS", ls: -0.3 },
  { icon: <Canvas />, title: "Files" },
  { icon: <Canvas />, title: "Files" },
  { icon: <Docs />, title: "CMPE280_HTML_Mark", ls: -0.2 },
  { icon: <PageIcon />, title: "Summary.html?city=&r", ls: 0, active: true },
  { icon: <Google />, title: "aptitude test sections -", ls: 0.13 },
];

const BOOKMARKS = [
  [<AppsGrid />, "Apps", 113, -0.08, 10],
  [<Folder />, "cmpe239", 170, 0.72, 7],
  [<FourIcu />, "Top Universities in...", 308, 0.11, 7],
  [<Pearl />, "Ethnic Pearl Polki Ea...", 308, 0.25, 6.500],
  [<Es />, "Question", 162, 0.56],
  [<Folder />, "vivaInk", 138, -0.13, 8],
  [<Folder />, "personal-job", 206, 0.35, 7],
  [<Folder />, "cmpe-294", 180, 0.73, 7],
  [<Folder />, "AjayBhaiyaStuff", 242, 0.17, 7.500],
  [<Folder />, "cmpe295", 170, 0.64, 7],
  [<Folder />, "295A", 251, 0.96, 7],
];

const DOCK = [
  [Finder, true],
  [Launchpad],
  [Photos],
  [Mail, true, "450"],
  [Calendar],
  [Notes, true],
  [Reminders],
  [Chrome, true],
  [Messages, true],
  [Preferences],
  [Terminal, true],
  [Safari, true],
  [Sublime, true],
];

const SECTIONS = [
  ["Quantative Section", 23.500],
  ["Reading Section", 23.500],
  ["Audio/Video Section", 16],
];

export default function App() {
  return (
    <Desktop>
      <Global />
      <Ground>
        <Soil />
      </Ground>
      <GroundShade />
      <BackWindow />

      <MenuBar>
        <Cell $w={41} />
        <Cell $w={67.700}>
          <Apple />
        </Cell>
        {MENUS.map(([label, w, ls, strong]) => (
          <Cell key={label} $w={w} $ls={ls} $strong={strong}>
            {label}
          </Cell>
        ))}
        <Spacer />
        <Cell $w={52}><BookStar /></Cell>
        <Cell $w={59}><AirPlay /></Cell>
        <Cell $w={64}><Wifi /></Cell>
        <Cell $w={57} $size={22} $ls={0.1}>54%</Cell>
        <Cell $w={75}><Battery /></Cell>
        <Cell $w={165} $ls={0.34}>Thu Sep 29</Cell>
        <Cell $w={191} $ls={0.85}>5:25:36 PM</Cell>
        <Cell $w={60}><Search /></Cell>
        <Cell $w={82}><ListIcon /></Cell>
      </MenuBar>

      <BrowserWindow>
        <TabStrip>
          <Lights>
            <Light $fill="#fc605c" $edge="#e24b47" />
            <Light $fill="#fdbc40" $edge="#e0a02f" />
            <Light $fill="#34c84a" $edge="#27ab3a" />
          </Lights>
          {TABS.map((t, i) => (
            <Tab key={i} $active={t.active} $z={t.active ? 10 : 8 - i}>
              {t.icon}
              <TabTitle $ls={t.ls}>{t.title}</TabTitle>
              <Close />
            </Tab>
          ))}
          <NewTab />
          <Profile>Kalpana</Profile>
        </TabStrip>

        <Toolbar>
          <Arrow color="#6b6b6b" />
          <ToolSlot $gap={28}><Arrow color="#d2d2d2" flip /></ToolSlot>
          <ToolSlot $gap={27}><Reload /></ToolSlot>
          <Omnibox>
            <Info />
            <Url>file:///Users/kalpanatripathi/Documents/sjsu/CMPE280/HTML5_MarkDataList_Assignment3/Summary.html?city=&amp;room=Room+337</Url>
            <Star />
          </Omnibox>
          <ToolSlot $gap={24}><Inbox /></ToolSlot>
          <ToolSlot $gap={26}><Lens /></ToolSlot>
          <ToolSlot $gap={22}><Cast /></ToolSlot>
          <ToolSlot $gap={34}><Kebab /></ToolSlot>
        </Toolbar>

        <BookmarkBar>
          {BOOKMARKS.map(([icon, label, w, ls, gap]) => (
            <Bookmark key={label} $w={w} $ls={ls} $gap={gap}>
              {icon}
              {label}
            </Bookmark>
          ))}
          <Bookmark $w={29}>
            <svg width="13" height="14" viewBox="0 0 13 14" fill="none" stroke="#555" strokeWidth="2">
              <path d="M1 1l4.500 6L1 13M7 1l4.500 6L7 13" />
            </svg>
          </Bookmark>
          <Bookmark $w={257} $ls={0.36}>
            <Folder />
            Other Bookmarks
          </Bookmark>
        </BookmarkBar>

        <Page>
          <Heading>Prometric Test</Heading>
          <Card>
            <CardTitle>Score Card</CardTitle>
            {SECTIONS.map(([label, gap]) => (
              <Section key={label}>
                <Marker $gap={gap} />
                {label}
              </Section>
            ))}
            <Closing>
              Thank You!!!
              <Finish>Finish</Finish>
            </Closing>
          </Card>
        </Page>
      </BrowserWindow>

      <Dock>
        {DOCK.map(([Icon, running, badge], i) => (
          <DockItem key={i} $running={running}>
            <Icon />
            {badge && <Badge>{badge}</Badge>}
          </DockItem>
        ))}
        <Divider />
        <DockItem>
          <Trash />
        </DockItem>
      </Dock>
    </Desktop>
  );
}
